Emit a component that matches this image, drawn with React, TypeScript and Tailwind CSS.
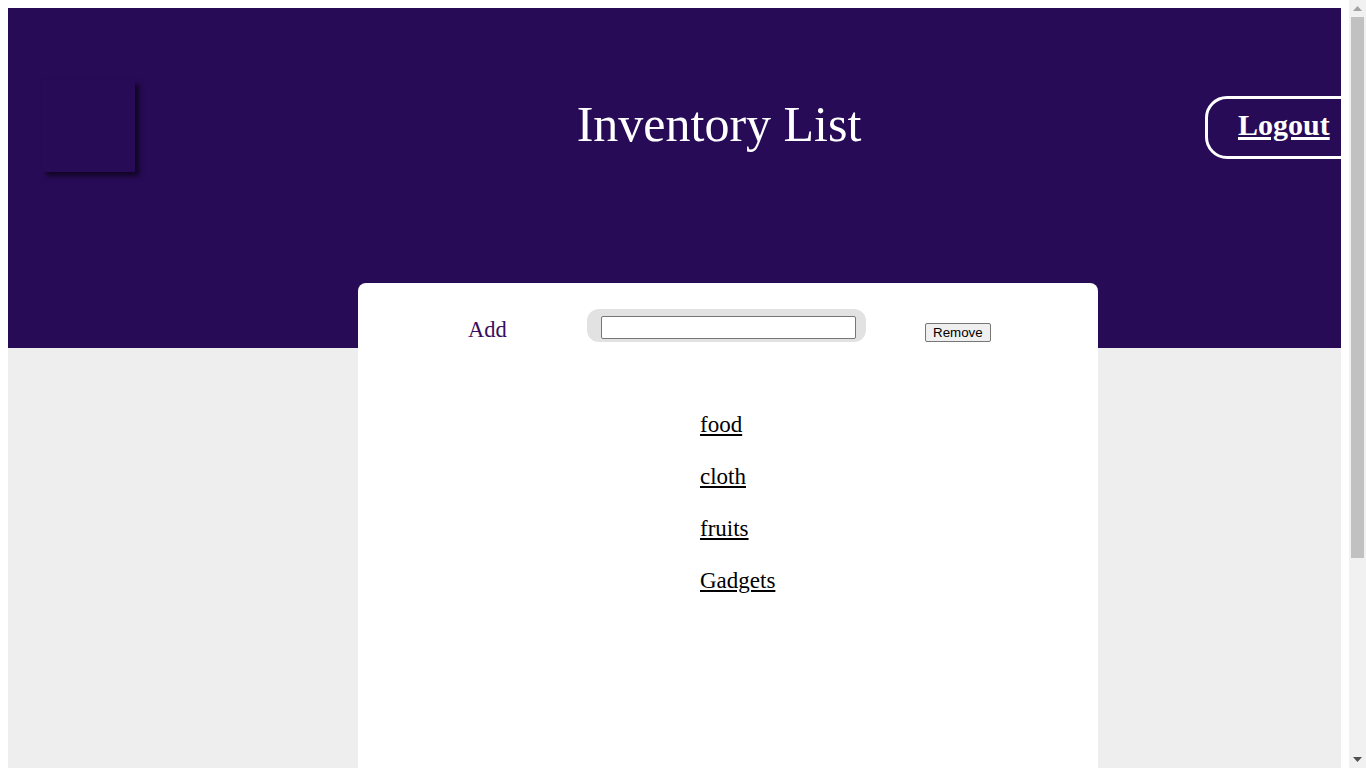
import React from 'react';

// 인벤토리 목록 페이지
const categories = ['food', 'cloth', 'fruits', 'Gadgets'];

// 스크롤바 모양 (헤드리스 화면에서는 실제 스크롤바가 안 보임)
const FakeScrollbar: React.FC = () => (
  <div className="flex h-screen w-[17px] shrink-0 flex-col items-center bg-[#f1f1f1]">
    <div className="flex h-[17px] w-full items-center justify-center">
      <svg width="9" height="5" viewBox="0 0 9 5">
        <polygon points="4.5,0 9,5 0,5" fill="#a3a3a3" />
      </svg>
    </div>
    <div className="h-[541px] w-[13px] bg-[#c1c1c1]" />
    <div className="flex-1" />
    <div className="flex h-[17px] w-full items-center justify-center">
      <svg width="9" height="5" viewBox="0 0 9 5">
        <polygon points="0,0 9,0 4.5,5" fill="#505050" />
      </svg>
    </div>
  </div>
);

const App: React.FC = () => {
  return (
    <div className="flex h-screen bg-white">
      <div className="h-screen flex-1 overflow-y-auto">
        <div className="p-2 font-['Liberation_Serif','Times_New_Roman',serif]">
          {/* 헤더 */}
          <header className="flex h-[340px] items-start overflow-hidden bg-[#280b57]">
            <div className="ml-[34px] mt-[72px] h-[92px] w-[93px] shrink-0 bg-[#280b57] shadow-[4px_4px_5px_rgba(0,0,0,0.6)]" />
            <h1 className="ml-[434px] mt-[88px] w-[300px] shrink-0 text-center text-[50px] font-normal leading-[1.15] text-white">
              Inventory List
            </h1>
            <button className="ml-[336px] mt-[88px] shrink-0 rounded-[22px] border-[3px] border-white px-[30px] pb-[13px] pt-[9px] text-[30px] font-bold leading-[1.15] text-white underline">
              Logout
            </button>
          </header>

          {/* 본문 */}
          <main className="flow-root h-[686px] bg-[#eeeeee]">
            <div className="relative -mt-[65px] ml-[350px] h-[750px] w-[740px] rounded-t-[8px] bg-white">
              <div className="flex h-[115px] items-start pl-[110px]">
                <span className="mt-[34px] w-[39px] text-[22.5px] leading-[1.15] text-[#3a0d5c]">
                  Add
                </span>
                <div className="ml-[80px] mt-[26px] flex h-[33px] items-start rounded-[12px] bg-[#e2e2e2] pl-[14px] pr-[10px] pt-[7px]">
                  <input
                    type="text"
                    className="h-[23px] w-[255px] rounded-[2px] border border-[#767676] bg-white px-1 font-['Liberation_Sans',Arial,sans-serif] text-[13.33px]"
                  />
                </div>
                <button className="ml-[59px] mt-[40px] rounded-[2px] border border-[#767676] bg-[#efefef] px-[7px] py-[1px] font-['Liberation_Sans',Arial,sans-serif] text-[13.33px] leading-[1.15] text-black">
                  Remove
                </button>
              </div>

              <ul className="ml-[342px] mt-px flex flex-col">
                {categories.map(c => (
                  <li key={c} className="text-[23px] leading-[52px]">
                    <a href="#" className="text-black underline">
                      {c}
                    </a>
                  </li>
                ))}
              </ul>
            </div>
          </main>
        </div>
      </div>
      <FakeScrollbar />
    </div>
  );
};

export default App;
